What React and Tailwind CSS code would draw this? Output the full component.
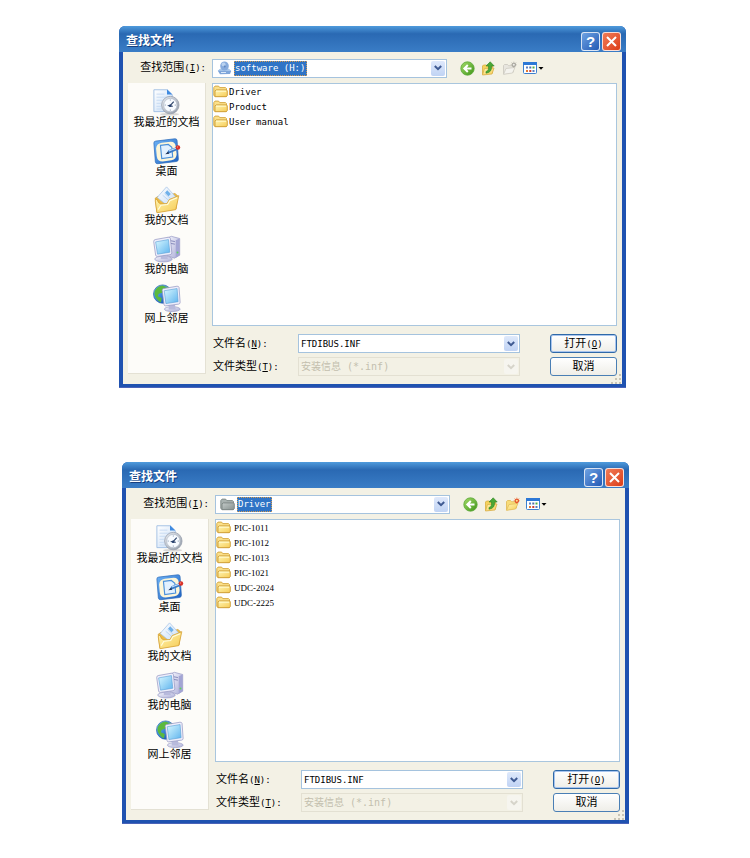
import { useState } from 'react';

const places = [
  { name: '我最近的文档', Icon: RecentIcon },
  { name: '桌面', Icon: DesktopIcon },
  { name: '我的文档', Icon: DocumentsIcon },
  { name: '我的电脑', Icon: ComputerIcon },
  { name: '网上邻居', Icon: NetworkIcon },
];

const dialogs = [
  {
    id: 'root',
    location: 'software (H:)',
    LocationIcon: DriveIcon,
    canCreate: false,
    files: ['Driver', 'Product', 'User manual'],
    nameClass: '',
  },
  {
    id: 'driver',
    location: 'Driver',
    LocationIcon: GrayFolderIcon,
    canCreate: true,
    files: [
      'PIC-1011',
      'PIC-1012',
      'PIC-1013',
      'PIC-1021',
      'UDC-2024',
      'UDC-2225',
    ],
    nameClass: "pl-0.5 font-['Liberation_Serif','Noto_Sans_CJK_SC',serif]",
  },
];

// gradients shared by every icon on the page
function Gradients() {
  const list = [
    ['gFolder', '#fff6b4', '#f6cb55'],
    ['gFolderGray', '#c4cbc9', '#87918f'],
    ['gPaper', '#ffffff', '#c6dcf6'],
    ['gScreen', '#d9f8ff', '#5fb4ee'],
    ['gCase', '#f6f6fd', '#a9abd6'],
    ['gDesk', '#6fb4f6', '#1c5fc0'],
    ['gGreen', '#a5dc6a', '#3d9417'],
    ['gGlobe', '#6cc4ff', '#0b47a8'],
    ['gClock', '#eceff4', '#8f98a6'],
  ];
  return (
    <svg className="absolute size-0" aria-hidden="true">
      <defs>
        {list.map(([id, from, to]) => (
          <linearGradient key={id} id={id} x1="0" y1="0" x2="1" y2="1">
            <stop offset="0" stopColor={from} />
            <stop offset="1" stopColor={to} />
          </linearGradient>
        ))}
      </defs>
    </svg>
  );
}

function RecentIcon() {
  return (
    <svg viewBox="0 0 32 32" className="size-7" aria-hidden="true">
      <path d="M1 2h15l6 5.500V27H1z" fill="url(#gPaper)" stroke="#9dbbe2" />
      <path d="M16 1.500v6h6z" fill="#3f8ae0" />
      <path
        d="M4 7h9M4 10.500h14M4 14h7M4 17.500h5M4 21h5M4 24h6"
        stroke="#c3d8f1"
      />
      <ellipse cx="19" cy="30" rx="11" ry="1.500" fill="#d9d8d6" />
      <circle cx="19.800" cy="19.500" r="10" fill="url(#gClock)" stroke="#929aa7" strokeWidth=".8" />
      <circle cx="19.800" cy="19.500" r="7.600" fill="#f8fbff" stroke="#b4bdca" strokeWidth=".8" />
      <path
        d="M19.800 13v1.500M19.800 24.500V26M13.300 19.500h1.500M24.800 19.500h1.500"
        stroke="#8fa0b8"
      />
      <path
        d="M19.300 20.500l4.400-5M16.800 20l5.700 1"
        stroke="#33486e"
        strokeWidth="1.400"
      />
      <circle cx="19.500" cy="20.300" r="1.400" fill="#27406e" />
    </svg>
  );
}

function DesktopIcon() {
  return (
    <svg viewBox="0 0 32 32" className="size-7" aria-hidden="true">
      <path
        d="M1 7Q.8 5 3 4.700L25 2Q27.300 1.800 27.500 4L29 25.500Q29 27.600 27 28L5.500 30.500Q3 30.700 2.700 28.500Z"
        fill="url(#gDesk)"
        stroke="#2a68b8"
        strokeWidth=".8"
      />
      <path
        d="M3.500 13Q4 7.500 10 6.500L20 5.300Q25.500 5 26 11L27 19.500Q27 25.500 21 26.500L11 28Q5 28 4.300 22Z"
        fill="#fdf6d8"
      />
      <path
        d="M8.500 9.500l9-1 4 3.200 1 11.300-12.500 1.700z"
        fill="#e2f1ff"
        stroke="#4a90da"
        strokeWidth="1.300"
      />
      <path d="M15.500 19.500l2-4.500 9.500-3.500 1.500 3-9.500 4z" fill="#3a7ac6" />
      <path d="M18 16l9-3.400" stroke="#c2e0ff" strokeWidth="1.200" />
      <path d="M14 19.800l3.300-3.300 1.200 2.500z" fill="#223658" />
      <circle cx="28.500" cy="12" r="2.600" fill="#d92f25" />
      <circle cx="28" cy="11.400" r=".8" fill="#f58a7d" />
    </svg>
  );
}

function DocumentsIcon() {
  return (
    <svg viewBox="0 0 32 32" className="size-7" aria-hidden="true">
      <path
        d="M2.500 14l3-2 6 .5L25 8.500l3 2.500-1.500 15-22 4z"
        fill="#ecbc47"
        stroke="#cf9c30"
        strokeWidth=".8"
      />
      <path
        d="M15.500 1L26.500 13 17 23 4.800 13z"
        fill="url(#gPaper)"
        stroke="#9dbee6"
        strokeWidth=".8"
      />
      <path d="M11 10.500l7 6M13.200 8.500l7 6" stroke="#b5d2f2" />
      <path d="M16.300 4.800l4 4.200-2.600 2.600-4-4z" fill="#6fb0ea" />
      <path
        d="M4.500 30.500L2.500 16.500l2-1.500Q6 20 9 20.500l7-.5 2.500-4.500L29.500 11l-3.500 16z"
        fill="url(#gFolder)"
        stroke="#d6a136"
        strokeWidth=".9"
        strokeLinejoin="round"
      />
      <path
        d="M6 27l3-5 7.800-.8 2.500-4.300 8.200-3.500"
        fill="none"
        stroke="#fffde0"
        strokeWidth="1.200"
      />
    </svg>
  );
}

function ComputerIcon() {
  return (
    <svg viewBox="0 0 32 32" className="size-7" aria-hidden="true">
      <path
        d="M16 3.500l5-2 9.500 2.500v19l-6 3.500-8.500-3z"
        fill="url(#gCase)"
        stroke="#9698c4"
        strokeWidth=".8"
      />
      <path d="M26 6v20l4.200-3V4z" fill="#a3a5d4" />
      <path d="M20 6.500l5 1M20 9.500l5 1" stroke="#7d80b5" />
      <circle cx="28" cy="20" r="1.100" fill="#5fd45b" />
      <ellipse cx="12" cy="27.500" rx="10" ry="3.300" fill="url(#gCase)" stroke="#9a9cc6" strokeWidth=".8" />
      <path d="M9 21h7l1 6.500H9z" fill="#b8badc" />
      <path
        d="M.8 7.500Q.8 5.500 2.500 5.200L17.500 2.500Q19.600 2.500 19.900 4L21.500 20.500Q21.500 22.200 19.500 22.500L5 24.500Q3.300 24.500 3 23Z"
        fill="#eeeefb"
        stroke="#9193c0"
        strokeWidth=".8"
      />
      <path d="M3 7.900L17.600 5.200 19.200 19.700 5.200 21.900z" fill="url(#gScreen)" stroke="#5aa0d6" strokeWidth=".7" />
    </svg>
  );
}

function NetworkIcon() {
  return (
    <svg viewBox="0 0 32 32" className="size-7" aria-hidden="true">
      <circle cx="11" cy="11.500" r="10.500" fill="url(#gGlobe)" stroke="#1c57ab" strokeWidth=".7" />
      <path
        d="M2 8Q5 1.800 11 1.700l4 1.800-3 3-1.500 3.500-4 1-1 3 4.500 2-1 5-3-2Q.5 14 2 8z"
        fill="#5cb93e"
      />
      <path d="M15 2.500l4 3 .5 3-4-1z" fill="#7bcb4b" />
      <ellipse cx="22" cy="28.700" rx="9" ry="2.800" fill="url(#gCase)" stroke="#9a9cc6" strokeWidth=".8" />
      <path d="M18 23h7l1 6h-8z" fill="#b8badc" />
      <path
        d="M10.500 7Q10.500 5.500 12 5.200L27.500 2.500Q29.500 2.500 29.800 4L31 21Q31 22.700 29.300 23L14.500 25Q12.900 25 12.600 23.500Z"
        fill="#eeeefb"
        stroke="#9193c0"
        strokeWidth=".8"
      />
      <path d="M12.800 7.700L27.500 5.200 28.700 20.200 14.800 22.400z" fill="url(#gScreen)" stroke="#5aa0d6" strokeWidth=".7" />
    </svg>
  );
}

function FolderIcon() {
  return (
    <svg viewBox="0 0 15 13" className="h-[13px] w-[15px] shrink-0" aria-hidden="true">
      <path
        d="M.8 10.500v-8L2 1.100h3.600L6.800 2.600h5.700l1 1v7.800H2z"
        fill="#fbe08a"
        stroke="#d3a43c"
        strokeWidth=".9"
      />
      <path
        d="M2 11.700V5.900l1.200-1h10.200l.9.900v4.800l-1.200 1.100z"
        fill="url(#gFolder)"
        stroke="#cd9c35"
        strokeWidth=".9"
      />
      <path d="M3 6.200h10" stroke="#fffbd0" />
    </svg>
  );
}

function GrayFolderIcon() {
  return (
    <svg viewBox="0 0 15 13" className="h-[13px] w-[15px] shrink-0" aria-hidden="true">
      <path
        d="M.8 10.500v-8L2 1.100h3.600L6.800 2.600h5.700l1 1v7.800H2z"
        fill="#a9b2b0"
        stroke="#7c8785"
        strokeWidth=".9"
      />
      <path
        d="M2 11.700V5.900l1.200-1h10.200l.9.900v4.800l-1.200 1.100z"
        fill="url(#gFolderGray)"
        stroke="#7a8482"
        strokeWidth=".9"
      />
    </svg>
  );
}

function DriveIcon() {
  return (
    <svg viewBox="0 0 15 14" className="h-3.5 w-[15px] shrink-0" aria-hidden="true">
      <path d="M.8 9.800L3.500 7.800h8l2.700 2.200-1.200 3-10 .2z" fill="#7fa6da" />
      <path d="M.8 9.800L3.500 7.800h8l2.700 2.200z" fill="#a9c8ea" />
      <ellipse cx="7.500" cy="5" rx="4.300" ry="4.600" fill="#86abdd" />
      <circle cx="6.600" cy="3.600" r="2" fill="#b9d2f0" />
      <circle cx="7.700" cy="5.400" r="1" fill="#5f86bf" />
      <path d="M4 11.500h5" stroke="#d9e8f8" />
    </svg>
  );
}

function BackIcon() {
  return (
    <svg viewBox="0 0 15 15" className="size-[15px]" aria-hidden="true">
      <circle cx="7.500" cy="7.500" r="6.700" fill="url(#gGreen)" stroke="#5aa838" strokeWidth=".8" />
      <path
        d="M11.500 7.500H4.500M7.800 4L4.300 7.500l3.500 3.500"
        fill="none"
        stroke="#fff"
        strokeWidth="2"
      />
    </svg>
  );
}

function UpIcon() {
  return (
    <svg viewBox="0 0 15 15" className="size-[15px]" aria-hidden="true">
      <path d="M1.500 13.500V5l1-1h3l1 1h5v7z" fill="#f5d25e" stroke="#d8ae42" strokeWidth=".8" />
      <path d="M1.500 14l2-6.500 9.500-.5-2 6z" fill="url(#gFolder)" stroke="#d9b04a" strokeWidth=".8" />
      <path
        d="M5 10.500Q8 10 7.500 5H5L9.200.8l4 4.200h-2.700q.6 6.500-5.500 7.200z"
        fill="#4aa836"
        stroke="#2f8526"
        strokeWidth=".6"
      />
    </svg>
  );
}

function NewFolderIcon({ active }) {
  return (
    <svg viewBox="0 0 15 15" className="size-[15px]" aria-hidden="true">
      <path
        d="M1.500 13V4.500l1-1h3l1 1.200h5V11z"
        fill={active ? '#f8dc78' : '#e8e6df'}
        stroke={active ? '#dfb753' : '#c9c7be'}
        strokeWidth=".8"
      />
      <path
        d="M1.500 13.300L4 7.500 13 6.500l-2.500 5.500z"
        fill={active ? 'url(#gFolder)' : '#f4f3ee'}
        stroke={active ? '#e3bc5b' : '#cecbc2'}
        strokeWidth=".8"
      />
      <circle
        cx="11.800"
        cy="3.800"
        r="1.700"
        fill={active ? '#ffe18a' : '#efeee8'}
        stroke={active ? '#e4502a' : '#aaa8a0'}
        strokeWidth="1.300"
      />
      <path
        d="M11.800.6v.8M11.800 6.200V7M8.600 3.800h.8M14.200 3.800h.8M9.500 1.500l.6.6M14.100 1.500l-.6.6"
        stroke={active ? '#f08b3c' : '#bdbbb2'}
        strokeWidth=".8"
      />
    </svg>
  );
}

function ViewsIcon() {
  return (
    <svg viewBox="0 0 21 14" className="h-3.5 w-[21px]" aria-hidden="true">
      <rect x=".5" y="1.500" width="13" height="11" rx="1" fill="#fff" stroke="#3c80d0" />
      <path d="M0 1h14v3H0z" fill="#2c78d6" />
      <path d="M3 6.500h2M9.500 10h2" stroke="#5b7fc0" strokeWidth="2" />
      <path d="M6.300 6.500h2" stroke="#4f6fa8" strokeWidth="2" />
      <path d="M9.500 6.500h2" stroke="#4eae44" strokeWidth="2" />
      <path d="M3 10h2" stroke="#e2762f" strokeWidth="2" />
      <path d="M6.300 10h2" stroke="#c93a35" strokeWidth="2" />
      <path d="M15.500 6h5L18 8.800z" fill="#000" />
    </svg>
  );
}

function Arrow({ disabled }) {
  return (
    <span
      className={
        disabled
          ? 'flex h-full w-[14px] shrink-0 items-center justify-center rounded-xs bg-[#f6f5ef]'
          : 'flex h-full w-[14px] shrink-0 items-center justify-center rounded-xs bg-linear-to-b from-[#dfe9fb] to-[#c0d3f4]'
      }
    >
      <svg viewBox="0 0 8 6" className="h-1.5 w-2" aria-hidden="true">
        <path
          d="M.8 1L4 4.200 7.200 1"
          fill="none"
          stroke={disabled ? '#d6d4ca' : '#3f5a92'}
          strokeWidth="2"
        />
      </svg>
    </span>
  );
}

// accelerator key shown after a label, e.g. (N)
function Key({ letter, colon = true }) {
  return (
    <span className="text-[9px]">
      (<u>{letter}</u>){colon && ':'}
    </span>
  );
}

function FileDialog({ dialog }) {
  const { id, location, LocationIcon, canCreate, files } = dialog;
  const [fileName, setFileName] = useState('FTDIBUS.INF');

  return (
    <section className="rounded-t-md border-b border-[#4a63b8] bg-[#1f52b0] px-1 pb-[3px]">
      <header className="-mx-1 flex h-[26px] items-center rounded-t-md bg-linear-to-b from-[#4f9bdc] via-[#2a69b3] via-30% to-[#3a7dc6] pt-1 pr-[5px] pl-[7px]">
        <h2 className="flex-1 text-[12px] leading-4 font-bold text-white [text-shadow:1px_1px_0_#173f80]">
          查找文件
        </h2>
        <div className="flex gap-0.5">
          <button
            aria-label="帮助"
            className="flex size-[19px] items-center justify-center rounded-[3px] border border-white/80 bg-linear-to-br from-[#6ea2e2] to-[#2459b4] font-['Liberation_Sans',sans-serif] text-[15px] leading-none font-bold text-white"
          >
            ?
          </button>
          <button
            aria-label="关闭"
            className="flex size-[19px] items-center justify-center rounded-[3px] border border-white/80 bg-linear-to-br from-[#f07a55] to-[#dc3c14]"
          >
            <svg viewBox="0 0 11 11" className="size-[11px]" aria-hidden="true">
              <path d="M1 1l9 9M10 1l-9 9" stroke="#fff" strokeWidth="2" />
            </svg>
          </button>
        </div>
      </header>

      <div className="bg-[#f3f1e5] pt-[7px] pr-[5px] pb-2 pl-[5px]">
        <div className="flex h-[18px] items-center">
          <label
            htmlFor={`${id}-location`}
            className="mr-1.5 w-[78px] shrink-0 text-right"
          >
            查找范围
            <Key letter="I" />
          </label>
          <div className="flex h-[19px] max-w-[235px] flex-1 items-center border border-[#a5c3de] bg-white p-px pl-1">
            <LocationIcon />
            <select
              id={`${id}-location`}
              className="ml-0.5 h-[15px] appearance-none border border-dotted border-[#d59b4f] bg-[#2f74c6] text-[9px] leading-none text-white outline-none"
            >
              <option>{location}</option>
            </select>
            <span className="flex-1" />
            <Arrow />
          </div>
          <div className="ml-[13px] flex items-center gap-1.5">
            <button aria-label="后退">
              <BackIcon />
            </button>
            <button aria-label="向上">
              <UpIcon />
            </button>
            <button aria-label="新建文件夹" disabled={!canCreate}>
              <NewFolderIcon active={canCreate} />
            </button>
            <button aria-label="查看">
              <ViewsIcon />
            </button>
          </div>
        </div>

        <div className="mt-1.5 flex gap-1.5">
          <nav className="mb-0.5 flex w-[78px] shrink-0 flex-col gap-[7px] border-r border-b border-[#e4e1d4] bg-[#fdfcf9] pt-[5px]">
            {places.map(({ name, Icon }) => (
              <button key={name} className="flex flex-col items-center">
                <Icon />
                <span className="whitespace-nowrap">{name}</span>
              </button>
            ))}
          </nav>

          <div className="min-w-0 flex-1">
            <ul className="min-h-[243px] border border-[#a9c6de] bg-white">
              {files.map((file) => (
                <li key={file}>
                  <button className="flex h-[15px] items-center gap-px">
                    <FolderIcon />
                    <span className={`text-[9px] ${dialog.nameClass}`}>
                      {file}
                    </span>
                  </button>
                </li>
              ))}
            </ul>

            <div className="mt-2 grid grid-cols-[86px_1fr_67px] items-center gap-y-1">
              <label htmlFor={`${id}-name`} className="pl-px">
                文件名
                <Key letter="N" />
              </label>
              <div className="mr-[30px] flex h-[19px] items-center border border-[#a5c3de] bg-white p-px">
                <input
                  id={`${id}-name`}
                  value={fileName}
                  onChange={(e) => setFileName(e.target.value)}
                  className="min-w-0 flex-1 pl-px text-[9px] outline-none"
                />
                <button aria-label="文件名列表" className="h-full">
                  <Arrow />
                </button>
              </div>
              <button className="h-[19px] rounded-[3px] border border-[#2f69a8] bg-linear-to-b from-white to-[#efeee8] shadow-[inset_0_0_0_1px_#a9c5ee]">
                打开
                <Key letter="O" colon={false} />
              </button>

              <label htmlFor={`${id}-type`} className="pl-px">
                文件类型
                <Key letter="T" />
              </label>
              <div className="mr-[30px] flex h-[19px] items-center border border-[#e3e0d2] p-px">
                <select
                  id={`${id}-type`}
                  disabled
                  className="min-w-0 flex-1 appearance-none pl-px text-[10px] text-[#c3bfae] opacity-100"
                >
                  <option>安装信息 (*.inf)</option>
                </select>
                <Arrow disabled />
              </div>
              <button className="h-[19px] rounded-[3px] border border-[#4a7fb5] bg-linear-to-b from-white to-[#efeee8]">
                取消
              </button>
            </div>
          </div>
        </div>

        {/* resize grip */}
        <svg
          viewBox="0 0 10 10"
          className="-mt-0.5 -mr-1 -mb-2 ml-auto size-2.5"
          aria-hidden="true"
        >
          <path
            d="M8 0h2v2H8zM4 4h2v2H4zM8 4h2v2H8zM0 8h2v2H0zM4 8h2v2H4zM8 8h2v2H8z"
            fill="#c9c5b6"
          />
        </svg>
      </div>
    </section>
  );
}

const App = () => {
  return (
    <main className="min-h-screen bg-white pt-[26px] pr-0.5 pb-8 font-['DejaVu_Sans_Mono','Noto_Sans_CJK_SC',monospace] text-[11px] leading-[14px] text-black">
      <Gradients />
      <div className="mx-auto flex max-w-[510px] flex-col gap-[74px]">
        <div className="mr-[3px]">
          <FileDialog dialog={dialogs[0]} />
        </div>
        <div className="ml-[3px]">
          <FileDialog dialog={dialogs[1]} />
        </div>
      </div>
    </main>
  );
};

export default App;
